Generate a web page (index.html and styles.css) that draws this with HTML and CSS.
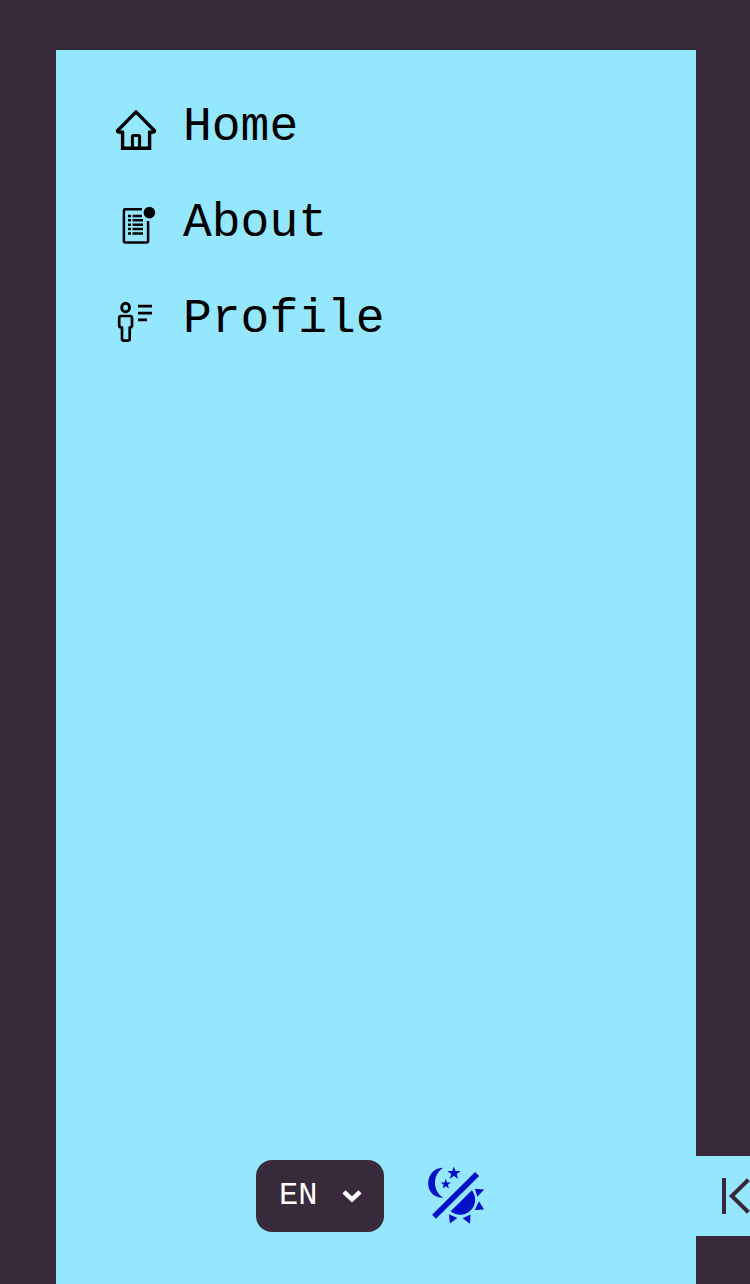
FILE: index.html
```html
<!DOCTYPE html>
<html lang="en">
<head>
<meta charset="utf-8">
<title>Menu</title>
<link rel="stylesheet" href="styles.css">
</head>
<body>
<div class="page">
  <aside class="sidebar">
    <nav class="menu">
      <a class="item">
        <svg class="icon" viewBox="0 0 60 60" fill="none" stroke="#000" stroke-width="3.4">
          <path d="M16.6 31.8V48.3H43.6V31.8"/>
          <path d="M18 32.2H13.2Q10.4 31.4 12 30.2L30 11.9L48 30.2Q49.6 31.4 46.8 32.2H42" stroke-linejoin="round"/>
          <path d="M26.4 48V36.6Q26.4 35.4 27.6 35.4H32.4Q33.6 35.4 33.6 36.6V48" stroke-width="3"/>
        </svg>
        <span>Home</span>
      </a>
      <a class="item">
        <svg class="icon" viewBox="0 0 60 60" fill="none" stroke="#000" stroke-width="2.5">
          <path d="M36 13.3H19Q17.9 13.3 17.9 14.4V45.3Q17.9 46.5 19 46.5H41Q42.1 46.5 42.1 45.3V25"/>
          <path d="M22 20H25M26.5 20H36M22 24.3H25M26.5 24.3H37M22 28.7H25M26.5 28.7H37M22 33H25M26.5 33H37M22 37.5H25M26.5 37.5H37" stroke-width="2.4"/>
          <circle cx="43.4" cy="16.6" r="5.8" fill="#000" stroke="none"/>
        </svg>
        <span>About</span>
      </a>
      <a class="item">
        <svg class="icon" viewBox="0 0 60 60" fill="none" stroke="#000" stroke-width="2.7" stroke-linejoin="round">
          <ellipse cx="19.6" cy="15.5" rx="3.9" ry="4.3" stroke-width="2.9"/>
          <path d="M15.2 24H24Q26 24 26 26V33.6Q26 35.6 23.7 35.6V46.8Q23.7 48.6 22 48.6H17.8Q16 48.6 16 46.8V35.6Q13.2 35.6 13.2 33.6V26Q13.2 24 15.2 24Z"/>
          <path d="M32 14.1H46M32 21.1H46M32 27.9H41"/>
        </svg>
        <span>Profile</span>
      </a>
    </nav>
    <div class="controls">
      <button class="language">
        <span>EN</span>
        <svg class="chevron" viewBox="0 0 20 14" fill="none" stroke="#fff" stroke-width="4.6"><path d="M2 2.8L10 10.4L18 2.8"/></svg>
      </button>
      <svg class="theme" viewBox="0 0 72 72" fill="#0010c8">
        <path d="M23.200 7.700C7 7.700 3 30 16 36.300Q19 38 23.400 37.600C12.500 31.500 12 14.500 23.200 7.700Z"/>
        <path d="M33.800 6.400L35.500 11H40.600L36.700 14L38.100 18.800L33.900 16L29.700 18.800L31.100 14L27.200 11H32.200Z"/>
        <path d="M25.800 18.500L27 22.400H31L27.900 24.700L29 28.500L25.800 26.300L22.600 28.500L23.700 24.700L20.600 22.400H24.600Z"/>
        <path d="M55.100 11.900L59.100 15.900L16 58.700L12.100 54.700Z"/>
        <path d="M51.900 30.300C55.800 35 56.700 43.500 52 49C46.500 56 36.500 56.500 30.700 51.300Z"/>
        <path d="M54.900 28.800L64.200 29.600L57.300 36.700ZM59 41.300L64 49.500L54.800 50ZM29 54.200L37.300 58L29.900 63.600ZM50.600 54.500L50 63.700L42.600 58.300Z"/>
      </svg>
    </div>
  </aside>
  <button class="collapse" aria-label="Collapse menu">
    <svg class="arrow" viewBox="0 0 54 80" fill="none" stroke="#392a3b" stroke-width="4"><path d="M28 22V58M52.400 23.800L35.800 40L52.400 56.200"/></svg>
  </button>
</div>
</body>
</html>
```
FILE: styles.css
```css
* { box-sizing: border-box; }
body { margin: 0; background: #392a3b; overflow: hidden; font-family: "Liberation Mono", monospace; color: #000; }
.page { display: flex; align-items: flex-end; height: 1284px; padding: 50px 0 0 56px; }
.sidebar { display: flex; flex-direction: column; justify-content: space-between; flex: none; width: 640px; height: 100%; padding: 29px 50px 52px; background: #95e7ff; }
.menu { display: flex; flex-direction: column; }
.item { display: flex; align-items: center; height: 96px; gap: 17px; font-size: 48px; line-height: 96px; }
.item span { height: 96px; }
.icon { width: 60px; height: 60px; flex: none; margin-top: 6px; }
.controls { display: flex; gap: 36px; padding-left: 150px; }
.language { display: flex; align-items: center; gap: 25px; width: 128px; height: 72px; padding: 0 0 2px 23px; border: 0; border-radius: 16px; background: #392a3b; color: #fff; font: 32px "Liberation Mono", monospace; }
.chevron { width: 20px; height: 14px; margin-top: 2px; }
.theme { width: 72px; height: 72px; }
.collapse { width: 54px; height: 80px; margin-bottom: 48px; padding: 0; border: 0; background: #95e7ff; flex: none; }
.arrow { display: block; width: 54px; height: 80px; }
```
